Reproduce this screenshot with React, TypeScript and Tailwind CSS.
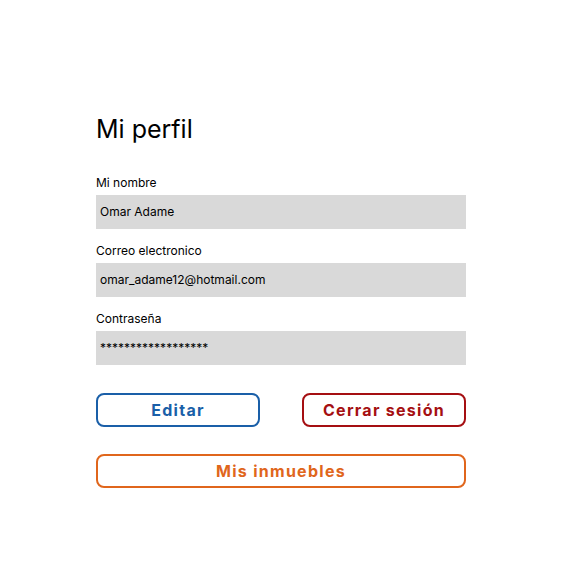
import React from 'react';

const FIELDS = [
  { label: 'Mi nombre', value: 'Omar Adame' },
  { label: 'Correo electronico', value: 'omar_adame12@hotmail.com' },
  { label: 'Contraseña', value: '******************' },
];

function Field({ label, value }: { label: string; value: string }) {
  return (
    <div className="flex flex-col">
      <label className="text-[12px] leading-[15px] text-black mb-[5px]">{label}</label>
      <div className="h-[34px] bg-[#d9d9d9] flex items-center px-[4px] text-[12px] text-black">
        {value}
      </div>
    </div>
  );
}

export default function App() {
  return (
    <div className="w-[581px] h-[567px] bg-white font-['Inter',sans-serif]">
      <div className="w-[370px] ml-[96px] pt-[113px]">
        <h1 className="text-[25px] leading-[32px] text-black mb-[30px]">Mi perfil</h1>

        <div className="flex flex-col gap-[14px]">
          {FIELDS.map((f) => (
            <Field key={f.label} label={f.label} value={f.value} />
          ))}
        </div>

        <div className="flex justify-between mt-[28px]">
          <button className="w-[164px] h-[34px] rounded-[8px] border-2 border-[#1a5fa8] text-[#1a5fa8] text-[16px] font-bold tracking-[0.08em]">
            Editar
          </button>
          <button className="w-[164px] h-[34px] rounded-[8px] border-2 border-[#a50f12] text-[#a50f12] text-[16px] font-bold tracking-[0.08em]">
            Cerrar sesión
          </button>
        </div>

        <button className="w-full h-[34px] mt-[27px] rounded-[8px] border-2 border-[#e0661c] text-[#e0661c] text-[16px] font-bold tracking-[0.08em]">
          Mis inmuebles
        </button>
      </div>
    </div>
  );
}
